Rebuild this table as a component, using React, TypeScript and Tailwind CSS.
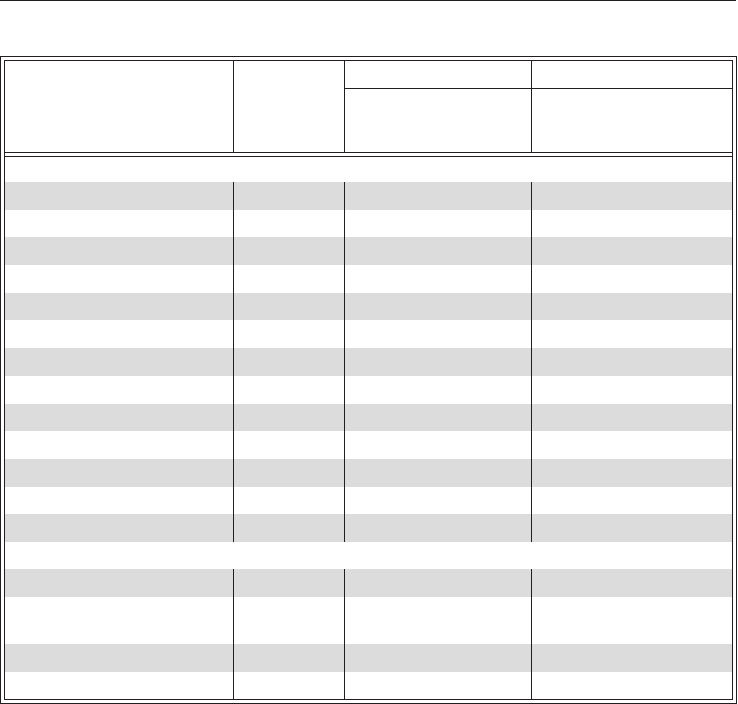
import React from "react";

type RowProps = { gray?: boolean; h: string; lines?: boolean };

function Row({ gray, h, lines = true }: RowProps) {
  const bg = gray ? "bg-[#dcdcdc]" : "bg-white";
  if (!lines) return <div className={`${h} ${bg} w-full`} />;
  return (
    <div className={`flex ${h} ${bg} w-full`}>
      <div className="w-[229px] shrink-0 border-r border-[#231f20]" />
      <div className="w-[111px] shrink-0 border-r border-[#231f20]" />
      <div className="w-[187px] shrink-0 border-r border-[#231f20]" />
      <div className="flex-1" />
    </div>
  );
}

export default function App() {
  const body: boolean[] = [];
  for (let i = 0; i < 13; i++) body.push(i % 2 === 0);
  return (
    <div className="w-[738px] h-[704px] bg-white overflow-hidden font-['Liberation_Sans',sans-serif]">
      <div className="w-[736px] h-px bg-[#231f20]" />
      <div className="h-[55px]" />
      <div className="w-[737px] h-[648px] border border-[#231f20] p-[3px]">
        <div className="h-full border border-[#231f20] flex flex-col">
          {/* header */}
          <div className="flex h-[91px] shrink-0">
            <div className="w-[229px] shrink-0 border-r border-[#231f20]" />
            <div className="w-[111px] shrink-0 border-r border-[#231f20]" />
            <div className="w-[187px] shrink-0 border-r border-[#231f20] flex flex-col">
              <div className="h-[28px] border-b border-[#231f20]" />
              <div className="flex-1" />
            </div>
            <div className="flex-1 flex flex-col">
              <div className="h-[28px] border-b border-[#231f20]" />
              <div className="flex-1" />
            </div>
          </div>
          <div className="h-px bg-[#231f20] shrink-0" />
          <div className="h-[3px] shrink-0" />
          <div className="h-px bg-[#231f20] shrink-0" />
          <Row h="h-[25px] shrink-0" lines={false} />
          {body.map((g, i) => (
            <Row key={i} gray={g} h="h-[27.69px] shrink-0" />
          ))}
          <Row h="h-[27px] shrink-0" lines={false} />
          <Row gray h="h-[28px] shrink-0" />
          <Row h="h-[47px] shrink-0" />
          <Row gray h="h-[28px] shrink-0" />
          <Row h="flex-1" />
        </div>
      </div>
    </div>
  );
}
